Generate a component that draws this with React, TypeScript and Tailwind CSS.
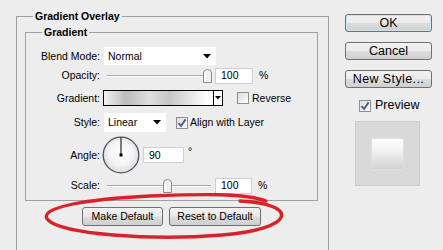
import React from 'react';

const btn =
  'flex items-center justify-center rounded-[3px] border border-[#707070] bg-[linear-gradient(to_bottom,#f2f2f2_0%,#ebebeb_48%,#dddddd_52%,#cfcfcf_100%)]';

function Arrow() {
  return (
    <svg width="8" height="5" viewBox="0 0 8 5">
      <path d="M0 0 L8 0 L4 4.5 Z" fill="#000" />
    </svg>
  );
}

function Check({ checked }: { checked?: boolean }) {
  return (
    <div className="w-[12px] h-[12px] border border-[#8f8f8f] bg-[linear-gradient(135deg,#dcdcdc,#ffffff)] flex items-center justify-center shrink-0">
      {checked && (
        <svg width="10" height="10" viewBox="0 0 10 10">
          <path d="M1.5 5.2 L4 8 L8.6 1.4" stroke="#4a5f97" strokeWidth="2" fill="none" />
        </svg>
      )}
    </div>
  );
}

function Slider({ width, thumb }: { width: number; thumb: number }) {
  return (
    <div className="relative h-[16px] ml-[7px]" style={{ width }}>
      <div className="absolute left-0 right-0 top-[7px] h-[2px] border-t border-[#a8a8a8] border-b border-b-white" />
      <svg className="absolute top-[1px]" style={{ left: thumb }} width="9" height="14" viewBox="0 0 9 14">
        <path d="M0.5 13.5 L0.5 4 Q0.5 0.5 4.5 0.5 Q8.5 0.5 8.5 4 L8.5 13.5 Z" fill="#f0f0f0" stroke="#8a8a8a" />
        <path d="M2 12 L2 5 Q2 2.2 4.5 2.2" stroke="#ffffff" fill="none" />
      </svg>
    </div>
  );
}

function NumInput({ value, w }: { value: string; w: number }) {
  return (
    <div className="h-[16px] bg-white border border-[#c9d0da] flex items-center pl-[5px]" style={{ width: w }}>
      {value}
    </div>
  );
}

function Label({ children }: { children: React.ReactNode }) {
  return <div className="w-[74px] text-right shrink-0">{children}</div>;
}

export default function App() {
  return (
    <div className="relative w-[443px] h-[250px] overflow-hidden bg-[#ededed] flex items-start text-black text-[10.5px] leading-[13px] font-['Liberation_Sans',Arial,sans-serif]">
      <fieldset className="ml-[16px] mt-[10px] w-[313px] h-[270px] border border-[#a0a0a0] pl-[8px] pr-[10px]">
        <legend className="ml-[8px] px-[2px] font-bold">Gradient Overlay</legend>
        <fieldset className="mt-[3px] h-[175px] border border-[#a0a0a0]">
          <legend className="ml-[16px] px-[2px] font-bold">Gradient</legend>

          <div className="flex items-center mt-[8px] h-[18px]">
            <Label>Blend Mode:</Label>
            <div className="ml-[4px] w-[112px] h-[18px] bg-white flex items-center justify-between pl-[4px] pr-[5px]">
              <span>Normal</span>
              <Arrow />
            </div>
          </div>

          <div className="flex items-center mt-[2px] h-[17px]">
            <Label>Opacity:</Label>
            <Slider width={104} thumb={96} />
            <div className="ml-[4px]"><NumInput value="100" w={38} /></div>
            <span className="ml-[6px]">%</span>
          </div>

          <div className="flex items-center mt-[6px] h-[16px]">
            <Label>Gradient:</Label>
            <div className="ml-[3px] w-[120px] h-[16px] border border-black flex">
              <div className="flex-1 bg-[linear-gradient(to_right,#f2f2f2_0%,#bcbcbc_20%,#dedede_42%,#c6c6c6_60%,#ffffff_95%)]" />
              <div className="w-[9px] border-l border-black bg-white flex items-center justify-center">
                <svg width="6" height="4" viewBox="0 0 6 4"><path d="M0 0 L6 0 L3 3.5 Z" fill="#000" /></svg>
              </div>
            </div>
            <div className="ml-[14px]"><Check /></div>
            <span className="ml-[3px]">Reverse</span>
          </div>

          <div className="flex items-center mt-[7px] h-[19px]">
            <Label>Style:</Label>
            <div className="ml-[4px] w-[62px] h-[19px] bg-white flex items-center justify-between pl-[4px] pr-[5px]">
              <span>Linear</span>
              <Arrow />
            </div>
            <div className="ml-[10px]"><Check checked /></div>
            <span className="ml-[2px]">Align with Layer</span>
          </div>

          <div className="flex items-center mt-[5px] h-[36px]">
            <Label>Angle:</Label>
            <svg className="ml-[2px]" width="38" height="38" viewBox="0 0 38 38">
              <defs>
                <radialGradient id="dial" cx="50%" cy="45%" r="55%">
                  <stop offset="0%" stopColor="#ffffff" />
                  <stop offset="60%" stopColor="#f4f4f4" />
                  <stop offset="100%" stopColor="#dadada" />
                </radialGradient>
              </defs>
              <circle cx="19" cy="19" r="17.8" fill="url(#dial)" stroke="#4b5366" strokeWidth="1.3" />
              <line x1="19" y1="19" x2="19" y2="1.5" stroke="#000" strokeWidth="1" />
              <rect x="17.5" y="17.5" width="3" height="3" fill="#000" />
            </svg>
            <div className="ml-[3px] self-start mt-[10px]"><NumInput value="90" w={41} /></div>
            <span className="ml-[4px] self-start mt-[8px]">°</span>
          </div>

          <div className="flex items-center mt-[4px] h-[17px]">
            <Label>Scale:</Label>
            <Slider width={104} thumb={56} />
            <div className="ml-[4px]"><NumInput value="100" w={37} /></div>
            <span className="ml-[6px]">%</span>
          </div>
        </fieldset>

        <div className="flex justify-center gap-[6px] mt-[6px]">
          <div className={`${btn} w-[81px] h-[19px]`}>Make Default</div>
          <div className={`${btn} w-[92px] h-[19px]`}>Reset to Default</div>
        </div>
      </fieldset>

      <div className="ml-[16px] mt-[14px] w-[87px] flex flex-col text-[12.5px] leading-[15px]">
        <div className={`${btn} h-[18px] border-[#3c7fb1] shadow-[inset_0_0_0_1px_#c9e6f7]`}>OK</div>
        <div className={`${btn} h-[18px] mt-[10px]`}>Cancel</div>
        <div className={`${btn} h-[18px] mt-[10px] tracking-[0.4px]`}>New Style...</div>
        <div className="flex items-center mt-[10px] ml-[14px]">
          <Check checked />
          <span className="ml-[4px]">Preview</span>
        </div>
        <div className="mt-[8px] ml-[10px] w-[65px] h-[65px] bg-[#d9d9d9] border border-[#cdcdcd] flex items-center justify-center">
          <div className="w-[31px] h-[30px] bg-[linear-gradient(to_bottom,#ffffff_0%,#f4f4f4_35%,#d2d2d2_100%)] shadow-[0_0_3px_#e6e6e6]" />
        </div>
      </div>

      <svg className="absolute inset-0 pointer-events-none" width="443" height="250" viewBox="0 0 443 250">
        <path
          d="M240 201 C 300 204, 296 229, 222 235 C 150 241, 62 234, 48 220 C 36 207, 90 199, 150 196 C 200 194, 245 193, 266 201"
          stroke="#d9232b"
          strokeWidth="3.3"
          fill="none"
          strokeLinecap="round"
        />
      </svg>
    </div>
  );
}
